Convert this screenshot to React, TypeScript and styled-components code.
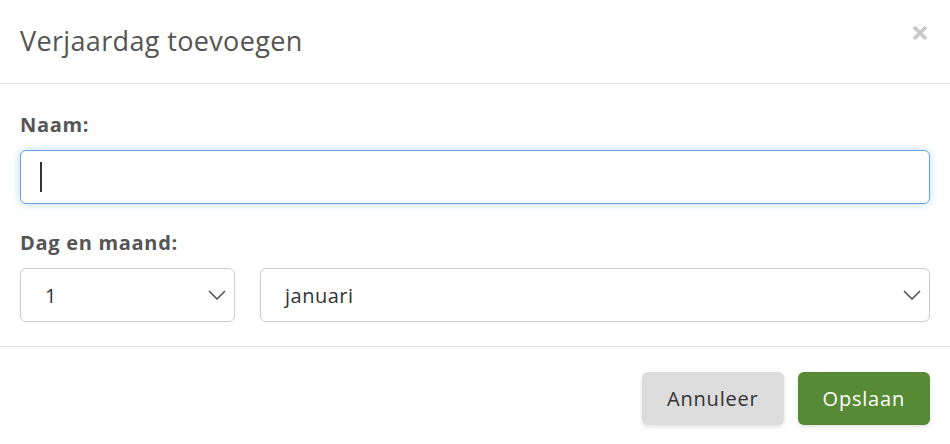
import React from 'react'
import styled, { createGlobalStyle } from 'styled-components'

const GlobalStyle = createGlobalStyle`
    html, body {
        margin: 0;
        padding: 0;
        background: #fff;
    }
    body {
        font-family: "Open Sans", "Noto Sans", sans-serif;
        color: #555;
    }
`

const Modal = styled.div`
    width: 950px;
    height: 444px;
    display: flex;
    flex-direction: column;
    background: #fff;
`

const Header = styled.div`
    height: 84px;
    box-sizing: border-box;
    border-bottom: 1px solid #e2e2e2;
    display: flex;
    align-items: center;
    justify-content: space-between;
    padding: 0 22px 2px 20px;
`

const Title = styled.h4`
    margin: 0;
    font-size: 27px;
    font-weight: 400;
    color: #555;
    letter-spacing: 0.35px;
`

const Close = styled.button`
    align-self: flex-start;
    margin-top: 25px;
    border: none;
    background: none;
    padding: 0;
    width: 16px;
    height: 16px;
    display: flex;
    align-items: center;
    justify-content: center;
    cursor: pointer;
`

const Body = styled.div`
    padding: 28px 20px 24px 20px;
    border-bottom: 1px solid #e2e2e2;
`

const Label = styled.label<{ top?: number }>`
    display: block;
    font-size: 20px;
    font-weight: 700;
    color: #555;
    letter-spacing: 0.7px;
    margin: ${props => props.top || 0}px 0 12px 0;
    line-height: 26px;
`

const InputWrap = styled.div`
    position: relative;
`

const TextInput = styled.input`
    width: 100%;
    height: 54px;
    box-sizing: border-box;
    border: 1px solid #66a3e0;
    border-radius: 6px;
    box-shadow: 0 0 8px rgba(102, 175, 233, 0.45);
    outline: none;
    padding: 0 19px;
    font-size: 19px;
    font-family: inherit;
    color: #333;
    caret-color: transparent;
`

const Caret = styled.span`
    position: absolute;
    left: 20px;
    top: 12px;
    width: 2px;
    height: 30px;
    background: #333;
`

const SelectRow = styled.div`
    display: flex;
    gap: 25px;
`

const Select = styled.div<{ width?: number }>`
    ${props => props.width ? `width: ${props.width}px;` : 'flex: 1;'}
    height: 54px;
    box-sizing: border-box;
    border: 1px solid #ccc;
    border-radius: 6px;
    display: flex;
    align-items: center;
    justify-content: space-between;
    padding: 0 8px 0 24px;
    font-size: 20px;
    letter-spacing: 0.5px;
    color: #333;
`

const Footer = styled.div`
    display: flex;
    justify-content: flex-end;
    gap: 14px;
    padding: 25px 20px 0 20px;
`

const Button = styled.button<{ primary?: boolean }>`
    height: 53px;
    box-sizing: border-box;
    border: none;
    border-radius: 6px;
    padding: 0 25px;
    font-family: inherit;
    font-size: 20px;
    letter-spacing: 0.8px;
    color: ${props => props.primary ? '#fff' : '#333'};
    background: ${props => props.primary ? '#578a34' : '#dcdcdc'};
    box-shadow: 0 2px 4px rgba(0, 0, 0, 0.12);
    cursor: pointer;
`

const Chevron = () => (
    <svg width="18" height="10" viewBox="0 0 18 10" fill="none">
        <path d="M1 1 L9 9 L17 1" stroke="#555" strokeWidth="1.6" />
    </svg>
)

const App: React.FC = () => {
    return (
        <>
            <GlobalStyle />
            <Modal>
                <Header>
                    <Title>Verjaardag toevoegen</Title>
                    <Close aria-label="Sluiten">
                        <svg width="16" height="16" viewBox="0 0 16 16">
                            <path d="M2 2 L14 14 M14 2 L2 14" stroke="#c8c8c8" strokeWidth="3.6" />
                        </svg>
                    </Close>
                </Header>
                <Body>
                    <Label>Naam:</Label>
                    <InputWrap>
                        <TextInput type="text" />
                        <Caret />
                    </InputWrap>
                    <Label top={26}>Dag en maand:</Label>
                    <SelectRow>
                        <Select width={215}>
                            1
                            <Chevron />
                        </Select>
                        <Select>
                            januari
                            <Chevron />
                        </Select>
                    </SelectRow>
                </Body>
                <Footer>
                    <Button>Annuleer</Button>
                    <Button primary>Opslaan</Button>
                </Footer>
            </Modal>
        </>
    )
}

export default App
